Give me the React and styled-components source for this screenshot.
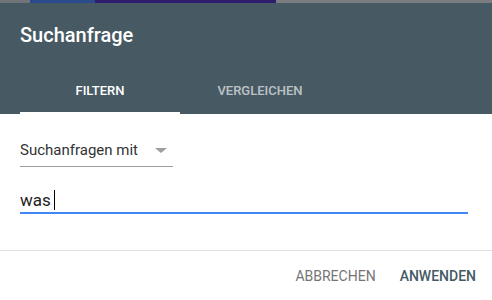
import styled, { createGlobalStyle } from "styled-components";

const GlobalStyle = createGlobalStyle`
    html, body {
        margin: 0;
        padding: 0;
        background: #ffffff;
        font-family: Roboto, "Liberation Sans", sans-serif;
    }
`;

const backdrop = [
    { w: 30, color: "#6f7478" },
    { w: 65, color: "#2b4a8e" },
    { w: 181, color: "#2f1c6c" },
    { w: 216, color: "#7b7d80" },
];

export default function App() {
    return (
        <>
            <GlobalStyle />
            <Page>
                <Backdrop>
                    {backdrop.map((b, i) => (
                        <BackdropPart key={i} $w={b.w} $color={b.color} />
                    ))}
                </Backdrop>
                <Dialog>
                    <Header>
                        <Title>Suchanfrage</Title>
                        <Tabs>
                            <Tab $active>Filtern</Tab>
                            <Tab>Vergleichen</Tab>
                        </Tabs>
                    </Header>
                    <Body>
                        <Select>
                            <span>Suchanfragen mit</span>
                            <Caret />
                        </Select>
                        <Input>
                            <span>was</span>
                            <Cursor />
                        </Input>
                    </Body>
                    <Actions>
                        <Button>Abbrechen</Button>
                        <Button $primary>Anwenden</Button>
                    </Actions>
                </Dialog>
            </Page>
        </>
    );
}

const Page = styled.div`
    width: 492px;
    height: 300px;
    display: flex;
    flex-direction: column;
    overflow: hidden;
`;

const Backdrop = styled.div`
    height: 3px;
    display: flex;
`;

const BackdropPart = styled.div`
    width: ${(p) => p.$w}px;
    background: ${(p) => p.$color};
`;

const Dialog = styled.div`
    flex: 1;
    display: flex;
    flex-direction: column;
    background: #ffffff;
`;

const Header = styled.div`
    background: #475a64;
    display: flex;
    flex-direction: column;
`;

const Title = styled.div`
    height: 63px;
    box-sizing: border-box;
    padding: 20px 0 0 20px;
    color: #ffffff;
    font-size: 20px;
    font-weight: 500;
    line-height: 24px;
`;

const Tabs = styled.div`
    display: flex;
    padding-left: 20px;
`;

const Tab = styled.div`
    width: 160px;
    height: 48px;
    box-sizing: border-box;
    display: flex;
    align-items: center;
    justify-content: center;
    text-transform: uppercase;
    font-size: 13px;
    font-weight: 500;
    color: ${(p) => (p.$active ? "#ffffff" : "rgba(255, 255, 255, 0.65)")};
    border-bottom: 2px solid ${(p) => (p.$active ? "#ffffff" : "transparent")};
    padding-top: 2px;
`;

const Body = styled.div`
    padding: 19px 24px 0 20px;
    height: 137px;
    box-sizing: border-box;
    border-bottom: 1px solid #e0e0e0;
    display: flex;
    flex-direction: column;
`;

const Select = styled.div`
    width: 153px;
    height: 34px;
    box-sizing: border-box;
    display: flex;
    align-items: center;
    justify-content: space-between;
    padding-right: 6px;
    border-bottom: 1px solid #9e9e9e;
    font-size: 15px;
    color: #333333;
`;

const Caret = styled.span`
    width: 0;
    height: 0;
    border-left: 6px solid transparent;
    border-right: 6px solid transparent;
    border-top: 5px solid #9e9e9e;
    margin-top: 1px;
`;

const Input = styled.div`
    margin-top: 20px;
    height: 27px;
    box-sizing: border-box;
    display: flex;
    align-items: center;
    border-bottom: 2px solid #4285f4;
    font-size: 17px;
    color: #222222;
`;

const Cursor = styled.span`
    width: 1px;
    height: 20px;
    margin-left: 3px;
    background: #000000;
`;

const Actions = styled.div`
    display: flex;
    justify-content: flex-end;
    align-items: center;
    gap: 24px;
    padding: 0 16px 0 0;
    height: 49px;
`;

const Button = styled.div`
    text-transform: uppercase;
    font-size: 14px;
    font-weight: ${(p) => (p.$primary ? 500 : 400)};
    color: ${(p) => (p.$primary ? "#455a64" : "#757575")};
`;
